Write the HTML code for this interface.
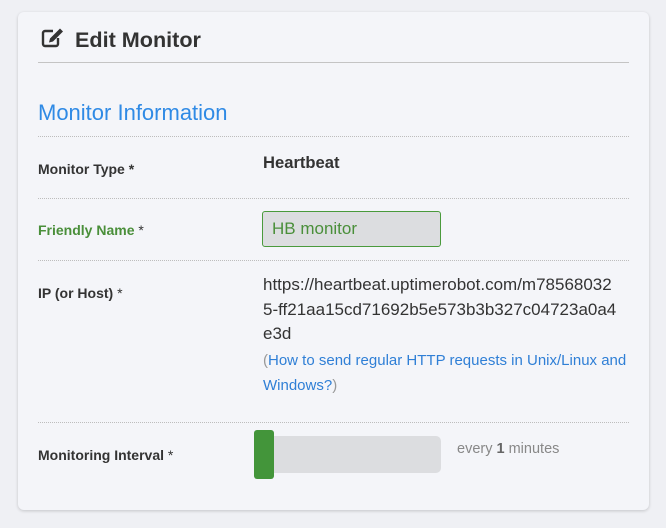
<!DOCTYPE html>
<html><head><style>
body{margin:0;width:666px;height:528px;background:#eff0f4;font-family:"Liberation Sans",Arial,sans-serif;position:relative;overflow:hidden}
.card{position:absolute;left:18px;top:12px;width:631px;height:498px;background:#f4f5f9;border-radius:6px;box-shadow:0 1px 3px rgba(0,0,0,.18)}
.a{position:absolute;white-space:nowrap}
.dl{position:absolute;left:38px;width:591px;border-top:1px dotted #bdbdbd;height:0}
.lbl{position:absolute;left:38px;font-size:14px;font-weight:bold;color:#333}
</style></head><body>
<div class="card"></div>
<svg class="a" style="left:41px;top:27px" width="24" height="22" viewBox="0 0 24 22">
<path d="M12 4H4a2 2 0 0 0-2 2v11a2 2 0 0 0 2 2h11a2 2 0 0 0 2-2v-6" fill="none" stroke="#333" stroke-width="2.4"/>
<path d="M19 1.5l3 3-10 10-4 1 1-4z" fill="#333"/>
</svg>
<div class="a" style="left:75px;top:27px;font-size:21.6px;font-weight:bold;color:#333">Edit Monitor</div>
<div class="a" style="left:38px;top:62px;width:591px;height:1px;background:#c4c4c4"></div>
<div class="a" style="left:38px;top:100px;font-size:22px;color:#2f8ae5">Monitor Information</div>
<div class="dl" style="top:136px"></div>
<div class="lbl" style="top:161px">Monitor Type *</div>
<div class="a" style="left:263px;top:153px;font-size:16.6px;font-weight:bold;color:#333">Heartbeat</div>
<div class="dl" style="top:198px"></div>
<div class="lbl" style="top:222px;color:#4a8f3a">Friendly Name <span style="color:#333;font-weight:normal">*</span></div>
<div class="a" style="left:262px;top:211px;width:177px;height:34px;background:#dcdde0;border:1px solid #4a9a3c;border-radius:3px"></div>
<div class="a" style="left:272px;top:219px;font-size:17px;color:#4a8f3a">HB monitor</div>
<div class="dl" style="top:260px"></div>
<div class="lbl" style="top:285px">IP (or Host) <span style="font-weight:normal">*</span></div>
<div class="a" style="left:263px;top:273px;font-size:17px;line-height:24.5px;color:#333;white-space:normal;width:380px">https://heartbeat.uptimerobot.com/m78568032<br>5-ff21aa15cd71692b5e573b3b327c04723a0a4<br>e3d</div>
<div class="a" style="left:263px;top:348px;font-size:15px;line-height:25px;color:#2f7fd6;white-space:normal;width:390px"><span style="color:#999">(</span>How to send regular HTTP requests in Unix/Linux and<br>Windows?<span style="color:#999">)</span></div>
<div class="dl" style="top:422px"></div>
<div class="lbl" style="top:447px">Monitoring Interval <span style="font-weight:normal">*</span></div>
<div class="a" style="left:255px;top:436px;width:186px;height:37px;background:#dcdde0;border-radius:5px"></div>
<div class="a" style="left:254px;top:430px;width:20px;height:49px;background:#43953a;border-radius:3px"></div>
<div class="a" style="left:457px;top:441px;font-size:14.5px;color:#888">every <b style="color:#666">1</b> minutes</div>
</body></html>
